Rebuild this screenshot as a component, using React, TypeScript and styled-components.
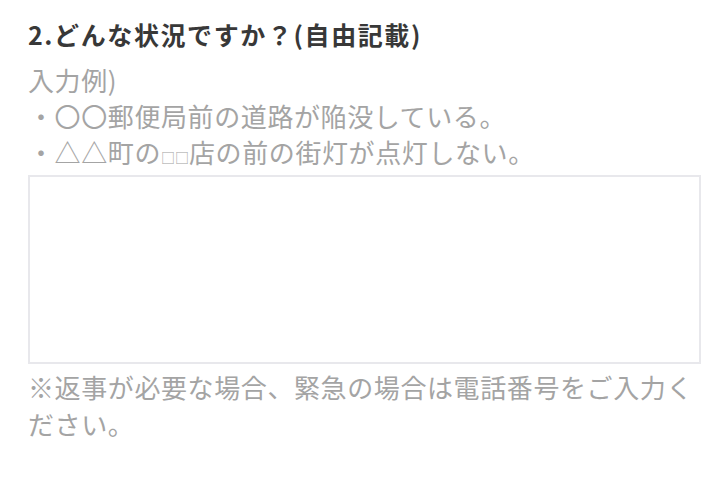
import React from "react";
import styled, { createGlobalStyle } from "styled-components";

const GlobalStyle = createGlobalStyle`
  html, body {
    margin: 0;
    padding: 0;
    background: #ffffff;
  }
  body {
    font-family: "Noto Sans CJK JP", "Noto Sans", sans-serif;
  }
`;

const Form = styled.div`
  width: 728px;
  height: 477px;
  box-sizing: border-box;
  padding: 16px 27px 0 28px;
  display: flex;
  flex-direction: column;
`;

const Question = styled.h2`
  margin: 0;
  font-size: 25px;
  line-height: 36px;
  font-weight: 700;
  color: #383838;
  letter-spacing: 1.6px;
`;

const Hint = styled.div`
  margin-top: 10px;
  color: #a4a4a4;
  font-size: 26px;
  line-height: 36px;
  font-weight: 400;
  letter-spacing: 0.6px;
`;

const HintLine = styled.div`
  white-space: nowrap;
`;

const Tiny = styled.span`
  font-size: 14px;
  letter-spacing: 0;
`;

const Field = styled.textarea`
  display: block;
  margin: 0;
  width: 100%;
  height: 189px;
  box-sizing: border-box;
  border: 2px solid #e8e8ec;
  border-radius: 0;
  resize: none;
  outline: none;
  background: #ffffff;
  font-family: inherit;
  font-size: 26px;
`;

const Note = styled.p`
  margin: 4px 0 0;
  color: #a4a4a4;
  font-size: 26px;
  line-height: 37px;
  font-weight: 400;
  letter-spacing: 0.6px;
`;

export default function App() {
  return (
    <>
      <GlobalStyle />
      <Form>
        <Question>2.どんな状況ですか？(自由記載)</Question>
        <Hint>
          <HintLine>入力例)</HintLine>
          <HintLine>・〇〇郵便局前の道路が陥没している。</HintLine>
          <HintLine>
            ・△△町の<Tiny>□□</Tiny>店の前の街灯が点灯しない。
          </HintLine>
        </Hint>
        <Field />
        <Note>※返事が必要な場合、緊急の場合は電話番号をご入力ください。</Note>
      </Form>
    </>
  );
}
